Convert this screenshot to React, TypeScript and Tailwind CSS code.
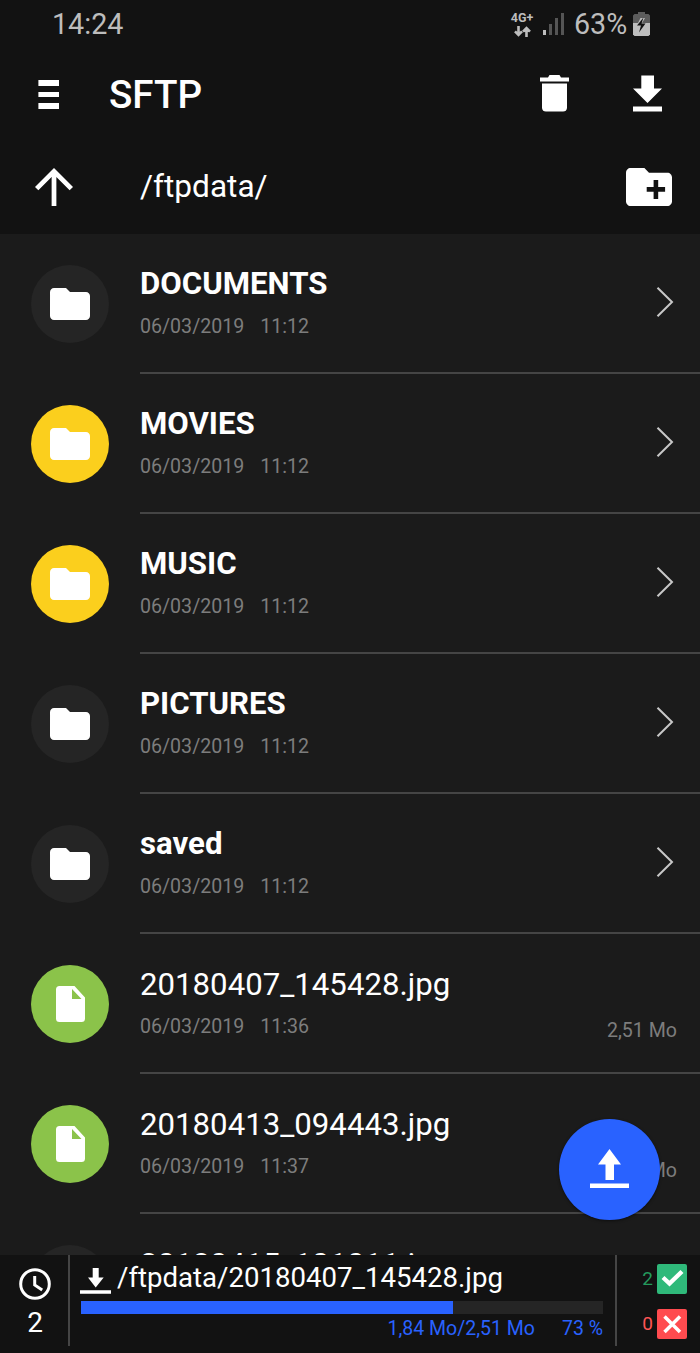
import { twMerge } from 'tailwind-merge';

interface Entry {
    name: string;
    time: string;
    type: 'folder' | 'file';
    color: string;
    size?: string;
}

const DARK = 'bg-[#252525]';
const YELLOW = 'bg-[#fbcf1d]';
const GREEN = 'bg-[#8bc34a]';

const entries: Entry[] = [
    { name: 'DOCUMENTS', time: '11:12', type: 'folder', color: DARK },
    { name: 'MOVIES', time: '11:12', type: 'folder', color: YELLOW },
    { name: 'MUSIC', time: '11:12', type: 'folder', color: YELLOW },
    { name: 'PICTURES', time: '11:12', type: 'folder', color: DARK },
    { name: 'saved', time: '11:12', type: 'folder', color: DARK },
    { name: '20180407_145428.jpg', time: '11:36', type: 'file', color: GREEN, size: '2,51 Mo' },
    { name: '20180413_094443.jpg', time: '11:37', type: 'file', color: GREEN, size: '2,51 Mo' },
    { name: '20180415_101011.jpg', time: '11:37', type: 'file', color: DARK },
];

const StatusBar: React.FC = () => (
    <div className="flex h-12 items-start pr-[50px] pl-[52px] text-[#bdbdbd]">
        <p className="mt-[7px] text-[28.7px] leading-[34px]">14:24</p>
        <div className="ml-auto flex items-start">
            <div className="mt-[11px] flex w-[24px] flex-col items-center">
                <p className="text-[12.5px] leading-[14px] font-bold">4G+</p>
                <svg className="mt-px h-[11px] w-[17px]" viewBox="0 0 17 11" fill="none" stroke="currentColor" strokeWidth="2.6">
                    <path d="M4.500 0v9M1 5.400l3.500 3.600L8 5.400M12.500 11V2M9 5.600l3.500-3.600L16 5.600" />
                </svg>
            </div>
            <svg className="mt-[13px] ml-[9px] h-[22px] w-[21px]" viewBox="0 0 21 22">
                <rect x="0" y="17" width="3" height="5" fill="#bdbdbd" />
                <rect x="6" y="11" width="3" height="11" fill="#555" />
                <rect x="12" y="5" width="3" height="17" fill="#555" />
                <rect x="18" y="0" width="3" height="22" fill="#555" />
            </svg>
            <p className="mt-[7px] ml-[10px] w-[54px] text-[28.7px] leading-[34px]">63%</p>
            <svg className="mt-[12px] ml-[5px] h-[24px] w-[17px]" viewBox="0 0 17 24">
                <path d="M5 0h7v2h3.500L17 3.500V11H0V3.500L1.500 2H5z" fill="#5c5c5c" />
                <path d="M0 11h17v11.500L15.500 24h-14L0 22.500z" fill="#bdbdbd" />
                <path d="M7.500 6h4.500l-3 5H5z" fill="#bdbdbd" />
                <path d="M10.500 5.500L4 13.500h4L6 20.500 12.500 11.500H8.500z" fill="#121212" />
            </svg>
        </div>
    </div>
);

const Header: React.FC = () => (
    <div className="flex h-[92px] items-start">
        <svg className="mt-[32px] ml-[38px] h-[29px] w-[21px]" viewBox="0 0 21 29" fill="#fff">
            <path d="M.400 0h20.600v6H.400zM.400 12h20.600v5H.400zM.400 23h20.600v6H.400z" />
        </svg>
        <h1 className="mt-[24px] ml-[50px] text-[38.6px] leading-[46px] font-medium">SFTP</h1>
        <svg className="mt-[27px] ml-auto h-[37px] w-[29px]" viewBox="0 0 29 37" fill="#fff">
            <path d="M0 2.500h8L9.500 0h10L21 2.500h8v4H0zM2 8.500h25V33a4 4 0 0 1-4 3.500H6a4 4 0 0 1-4-3.500z" />
        </svg>
        <svg className="mt-[27px] mr-[38px] ml-[64px] h-[37px] w-[29px]" viewBox="0 0 29 37" fill="#fff">
            <path d="M8.300 .500h12.700v13H29L14.500 28 0 13.500h8.300zM0 31.500h29v5H0z" />
        </svg>
    </div>
);

const PathBar: React.FC = () => (
    <div className="flex h-[94px] items-start">
        <svg className="mt-[28px] ml-[35px] h-[38px] w-[38px]" viewBox="4 4 16 16" fill="#fff">
            <path d="M4 12l1.410 1.410L11 7.830V20h2V7.830l5.580 5.590L20 12l-8-8-8 8z" />
        </svg>
        <p className="mt-[27px] ml-[67px] text-[31.6px] leading-10">/ftpdata/</p>
        <svg className="mt-[28px] mr-[28px] ml-auto h-[38px] w-[46px]" viewBox="2 4 20 16" preserveAspectRatio="none" fill="#fff">
            <path d="M20 6h-8l-2-2H4c-1.110 0-1.990.890-1.990 2L2 18c0 1.110.890 2 2 2h16c1.110 0 2-.890 2-2V8c0-1.110-.890-2-2-2zm-1 8h-3v3h-2v-3h-3v-2h3V9h2v3h3v2z" />
        </svg>
    </div>
);

const EntryIcon: React.FC<{ type: Entry['type']; color: string }> = ({ type, color }) => (
    <div className={twMerge('mt-[31px] ml-[31px] flex size-[78px] shrink-0 items-center justify-center rounded-full', color)}>
        {type === 'folder' ? (
            <svg className="h-[32px] w-[40px]" viewBox="2 4 20 16" preserveAspectRatio="none" fill="#fff">
                <path d="M10 4H4c-1.100 0-1.990.900-1.990 2L2 18c0 1.100.900 2 2 2h16c1.100 0 2-.900 2-2V8c0-1.100-.900-2-2-2h-8l-2-2z" />
            </svg>
        ) : (
            <svg className="h-[36px] w-[29px]" viewBox="0 0 29 36" fill="#fff">
                <path d="M3.500 0H18.500L29 11.500V32.500a3.500 3.500 0 0 1-3.500 3.500h-22A3.500 3.500 0 0 1 0 32.500v-29A3.500 3.500 0 0 1 3.500 0zM16 3v10h9.500z" fillRule="evenodd" />
            </svg>
        )}
    </div>
);

const EntryRow: React.FC<{ entry: Entry }> = ({ entry }) => {
    const { name, time, type, color, size } = entry;
    return (
        <li className="flex h-[140px] shrink-0">
            <EntryIcon type={type} color={color} />
            <div className="ml-[31px] flex flex-1 border-b-2 border-[#454545]">
                <div className={type === 'folder' ? 'pt-[30px]' : 'pt-[31px]'}>
                    <p className={twMerge('text-[31.2px] leading-10', type === 'folder' && 'font-bold')}>{name}</p>
                    <p className={twMerge('mt-[11px] flex gap-4 text-[19.6px] leading-6 text-[#7d7d7d]', type === 'file' && 'mt-[10px]')}>
                        <span>06/03/2019</span>
                        <span>{time}</span>
                    </p>
                </div>
                {type === 'folder' ? (
                    <svg className="mt-[52px] mr-[26px] ml-auto h-[32px] w-[18px]" viewBox="0 0 18 32" fill="none" stroke="#c8c8c8" strokeWidth="2">
                        <path d="M1.500 1.700L16 16 1.500 30.300" />
                    </svg>
                ) : (
                    <p className="mt-[85px] mr-[23px] ml-auto text-[19.6px] leading-6 text-[#7d7d7d]">{size}</p>
                )}
            </div>
        </li>
    );
};

const TransferBar: React.FC = () => (
    <footer className="flex h-[98px] shrink-0 bg-[#121212]">
        <div className="flex h-[91px] w-[70px] flex-col items-center border-r-2 border-[#454545] pl-[2px]">
            <svg className="mt-[13px] size-[32px]" viewBox="0 0 32 32" fill="none" stroke="#fff" strokeWidth="3">
                <circle cx="16" cy="16" r="14.300" />
                <path d="M15.700 8v9l7.500 5" />
            </svg>
            <p className="mt-[7px] text-[28px] leading-8">2</p>
        </div>
        <div className="flex h-[91px] w-[547px] flex-col border-r-2 border-[#454545] pr-[12px] pl-[10px]">
            <div className="flex h-[46px] items-start">
                <svg className="mt-[13px] h-[26px] w-[31px]" viewBox="0 0 31 26" fill="#fff">
                    <path d="M12.700 0h6v9.500h5L15.700 19.500 8 9.500h4.700zM0 22.200h31V25.700H0z" />
                </svg>
                <p className="mt-[7px] ml-[6px] text-[27.6px] leading-8">/ftpdata/20180407_145428.jpg</p>
            </div>
            <div className="ml-px h-[13px] bg-[#252525]">
                <div className="h-full bg-[#2962ff]" style={{ width: '71.3%' }} />
            </div>
            <div className="mt-[3px] flex justify-end gap-[27px] text-[19.500px] leading-6 text-[#2962ff]">
                <span>1,84 Mo/2,51 Mo</span>
                <span>73 %</span>
            </div>
        </div>
        <div className="flex flex-1 flex-col gap-[15px] pt-[9px] pr-[13px] text-[19px]">
            <div className="flex items-center justify-end gap-[4px] text-[#249a5c]">
                <span className="leading-6">2</span>
                <svg className="size-[30px]" viewBox="0 0 30 30" fill="none">
                    <rect width="30" height="30" rx="2" fill="#2fb97a" />
                    <path d="M6 13.500l6.500 6L25 7.500" stroke="#fff" strokeWidth="4.300" />
                </svg>
            </div>
            <div className="flex items-center justify-end gap-[4px] text-[#ff5555]">
                <span className="leading-6">0</span>
                <svg className="size-[30px]" viewBox="0 0 30 30" fill="none">
                    <rect width="30" height="30" rx="2" fill="#ff4b4f" />
                    <path d="M7.500 7.500l15.500 15.500M23 7.500L7.500 23" stroke="#fff" strokeWidth="3.500" />
                </svg>
            </div>
        </div>
    </footer>
);

const App: React.FC = () => (
    <div className="relative flex h-[1353px] w-[700px] flex-col overflow-hidden bg-[#1b1b1b] font-[Roboto,sans-serif] text-white">
        <div className="h-[234px] shrink-0 bg-[#121212]">
            <StatusBar />
            <Header />
            <PathBar />
        </div>
        <ul className="flex min-h-0 flex-1 flex-col overflow-hidden">
            {entries.map((entry) => (
                <EntryRow key={entry.name} entry={entry} />
            ))}
        </ul>
        <TransferBar />
        <button className="absolute top-[1119px] left-[559px] flex size-[101px] justify-center rounded-full bg-[#2962ff] shadow-[0_1px_3px_rgba(0,0,0,0.5)]">
            <svg className="mt-[30px] h-[39px] w-[39px]" viewBox="0 0 39 39" fill="#fff">
                <path d="M19.500 0L31 15.500h-7V31h-8.500V15.500H8zM0 34.500h39V39H0z" />
            </svg>
        </button>
    </div>
);

export default App;
